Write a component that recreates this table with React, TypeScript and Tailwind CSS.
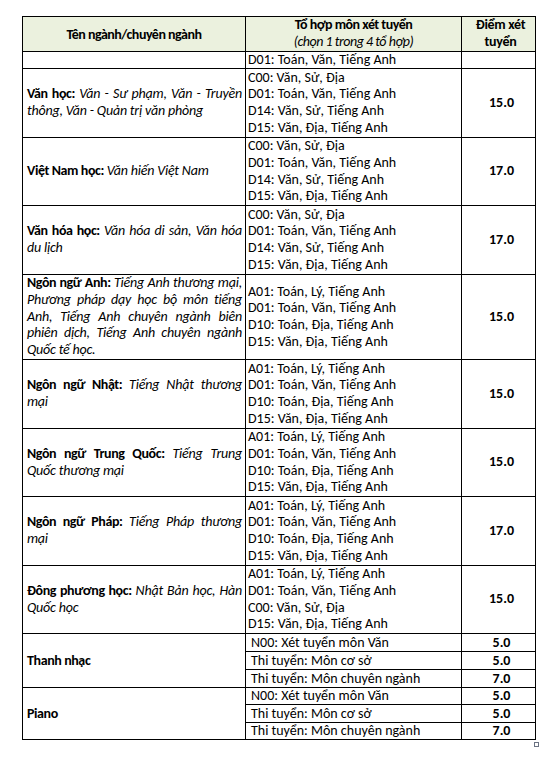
type Line = { bold?: string; text: string };

type Major = {
  lines: Line[];
  combos: string[];
  score: string;
  height: string;
};

const SOCIAL = ["C00: Văn, Sử, Địa", "D01: Toán, Văn, Tiếng Anh", "D14: Văn, Sử, Tiếng Anh", "D15: Văn, Địa, Tiếng Anh"];
const LANG = ["A01: Toán, Lý, Tiếng Anh", "D01: Toán, Văn, Tiếng Anh", "D10: Toán, Địa, Tiếng Anh", "D15: Văn, Địa, Tiếng Anh"];

const MAJORS: Major[] = [
  {
    lines: [
      { bold: "Văn học:", text: "Văn - Sư phạm, Văn - Truyền" },
      { text: "thông, Văn - Quản trị  văn phòng" },
    ],
    combos: SOCIAL,
    score: "15.0",
    height: "h-[69px]",
  },
  {
    lines: [{ bold: "Việt Nam học:", text: "Văn hiến Việt Nam" }],
    combos: SOCIAL,
    score: "17.0",
    height: "h-[68px]",
  },
  {
    lines: [
      { bold: "Văn hóa học:", text: "Văn  hóa di sản, Văn hóa" },
      { text: "du lịch" },
    ],
    combos: SOCIAL,
    score: "17.0",
    height: "h-[69px]",
  },
  {
    lines: [
      { bold: "Ngôn ngữ Anh:", text: "Tiếng Anh thương mại," },
      { text: "Phương pháp dạy học bộ môn tiếng" },
      { text: "Anh, Tiếng Anh chuyên ngành biên" },
      { text: "phiên dịch, Tiếng Anh chuyên ngành" },
      { text: "Quốc tế học." },
    ],
    combos: LANG,
    score: "15.0",
    height: "h-[85px]",
  },
  {
    lines: [
      { bold: "Ngôn ngữ Nhật:", text: "Tiếng Nhật thương" },
      { text: "mại" },
    ],
    combos: LANG,
    score: "15.0",
    height: "h-[69px]",
  },
  {
    lines: [
      { bold: "Ngôn ngữ Trung Quốc:", text: "Tiếng Trung" },
      { text: "Quốc thương mại" },
    ],
    combos: LANG,
    score: "15.0",
    height: "h-[68px]",
  },
  {
    lines: [
      { bold: "Ngôn ngữ Pháp:", text: "Tiếng Pháp thương" },
      { text: "mại" },
    ],
    combos: LANG,
    score: "17.0",
    height: "h-[69px]",
  },
  {
    lines: [
      { bold: "Đông phương học:", text: "Nhật Bản học, Hàn" },
      { text: "Quốc học" },
    ],
    combos: ["A01: Toán, Lý, Tiếng Anh", "D01: Toán, Văn, Tiếng Anh", "C00: Văn, Sử, Địa", "D15: Văn, Địa, Tiếng Anh"],
    score: "15.0",
    height: "h-[68px]",
  },
];

const ARTS = [
  {
    name: "Thanh nhạc",
    rows: [
      { text: "N00: Xét tuyển môn Văn", score: "5.0", height: "h-[18px]" },
      { text: "Thi tuyển: Môn cơ sở", score: "5.0", height: "h-[18px]" },
      { text: "Thi tuyển: Môn chuyên ngành", score: "7.0", height: "h-[18px]" },
    ],
  },
  {
    name: "Piano",
    rows: [
      { text: "N00: Xét tuyển môn Văn", score: "5.0", height: "h-[17px]" },
      { text: "Thi tuyển: Môn cơ sở", score: "5.0", height: "h-[18px]" },
      { text: "Thi tuyển: Môn chuyên ngành", score: "7.0", height: "h-[17px]" },
    ],
  },
];

const cell = "border border-black p-0 align-middle";

export default function App() {
  return (
    <div className="min-h-[760px] w-[552px] bg-white pl-[22px] pt-[16px] font-['Carlito','Liberation_Sans',sans-serif] text-[14px] leading-[16.75px] text-black">
      <table className="w-[513px] table-fixed border-collapse">
        <colgroup>
          <col className="w-[223px]" />
          <col className="w-[216px]" />
          <col className="w-[74px]" />
        </colgroup>
        <thead>
          <tr className="h-[35px] bg-[#ebf1de]">
            <th className={`${cell} pt-[2px] text-center font-bold tracking-[-0.5px]`}>Tên ngành/chuyên ngành</th>
            <th className={`${cell} text-center tracking-[-0.5px]`}>
              <div className="font-bold">Tổ hợp môn xét tuyển</div>
              <div className="font-normal italic">(chọn 1 trong 4 tổ hợp)</div>
            </th>
            <th className={`${cell} pl-[4px] text-center font-bold tracking-[-0.3px]`}>
              <div>Điểm xét</div>
              <div>tuyển</div>
            </th>
          </tr>
        </thead>
        <tbody>
          <tr className="h-[17px] leading-[16px]">
            <td className={cell}></td>
            <td className={`${cell} pl-[2px]`}>D01: Toán, Văn, Tiếng Anh</td>
            <td className={cell}></td>
          </tr>
          {MAJORS.map((m) => (
            <tr key={m.lines[0].bold} className={m.height}>
              <td className={`${cell} pl-[4px] pr-[3px] tracking-[-0.2px]`}>
                {m.lines.map((l, i) => (
                  <div
                    key={i}
                    className={`whitespace-nowrap ${
                      i < m.lines.length - 1 ? "text-justify [text-align-last:justify]" : "text-left"
                    }`}
                  >
                    {l.bold && <span className="font-bold tracking-[-0.4px]">{l.bold} </span>}
                    <span className="italic">{l.text}</span>
                  </div>
                ))}
              </td>
              <td className={`${cell} pl-[2px]`}>
                {m.combos.map((c) => (
                  <div key={c}>{c}</div>
                ))}
              </td>
              <td className={`${cell} pl-[6px] text-center font-bold`}>{m.score}</td>
            </tr>
          ))}
          {ARTS.map((a) =>
            a.rows.map((r, i) => (
              <tr key={a.name + i} className={`${r.height} leading-[16px]`}>
                {i === 0 && (
                  <td rowSpan={3} className={`${cell} px-[4px] font-bold tracking-[-0.4px]`}>
                    {a.name}
                  </td>
                )}
                <td className={`${cell} pl-[5px]`}>{r.text}</td>
                <td className={`${cell} pl-[6px] text-center font-bold`}>{r.score}</td>
              </tr>
            ))
          )}
        </tbody>
      </table>
      <div className="ml-[512px] mt-[2px] h-[5px] w-[5px] border border-gray-500"></div>
    </div>
  );
}
